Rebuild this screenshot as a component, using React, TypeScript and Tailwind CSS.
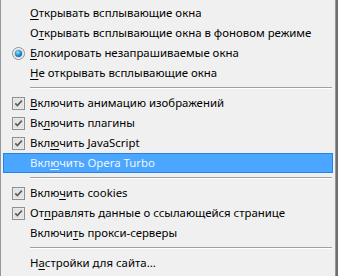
import type { ReactNode } from 'react';

type Item =
  | { kind: 'sep' }
  | {
      kind: 'item';
      pre: string;
      key: string;
      post: string;
      mark?: 'radio' | 'check';
      active?: boolean;
    };

const items: Item[] = [
  { kind: 'item', pre: '', key: 'О', post: 'ткрывать всплывающие окна' },
  { kind: 'item', pre: 'О', key: 'т', post: 'крывать всплывающие окна в фоновом режиме' },
  { kind: 'item', pre: '', key: 'Б', post: 'локировать незапрашиваемые окна', mark: 'radio' },
  { kind: 'item', pre: '', key: 'Н', post: 'е открывать всплывающие окна' },
  { kind: 'sep' },
  { kind: 'item', pre: '', key: 'В', post: 'ключить анимацию изображений', mark: 'check' },
  { kind: 'item', pre: 'Вк', key: 'л', post: 'ючить плагины', mark: 'check' },
  { kind: 'item', pre: 'Вкл', key: 'ю', post: 'чить JavaScript', mark: 'check' },
  { kind: 'item', pre: 'Вкл', key: 'ю', post: 'чить Opera Turbo', active: true },
  { kind: 'sep' },
  { kind: 'item', pre: 'Вклю', key: 'ч', post: 'ить cookies', mark: 'check' },
  { kind: 'item', pre: 'От', key: 'п', post: 'равлять данные о ссылающейся странице', mark: 'check' },
  { kind: 'item', pre: 'Включи', key: 'т', post: 'ь прокси-серверы' },
  { kind: 'sep' },
  { kind: 'item', pre: 'Н', key: 'а', post: 'стройки для сайта...' },
];

function Radio() {
  return (
    <svg width="13" height="13" viewBox="0 0 13 13">
      <defs>
        <radialGradient id="rb" cx="0.4" cy="0.35" r="0.7">
          <stop offset="0" stopColor="#9fe3ff" />
          <stop offset="0.5" stopColor="#2a9be0" />
          <stop offset="1" stopColor="#0d5ca8" />
        </radialGradient>
      </defs>
      <circle cx="6.5" cy="6.5" r="6" fill="#f4f4f4" stroke="#8e8f8f" />
      <circle cx="6.5" cy="6.5" r="4.6" fill="#dcdcdc" />
      <circle cx="6.5" cy="6.5" r="3.6" fill="url(#rb)" />
    </svg>
  );
}

function Check() {
  return (
    <svg width="13" height="13" viewBox="0 0 13 13">
      <rect x="0.5" y="0.5" width="12" height="12" fill="#f4f4f4" stroke="#8e8f8f" />
      <rect x="2" y="2" width="9" height="9" fill="#e6e6e6" stroke="#d2d2d2" strokeWidth="0.6" />
      <path d="M3.3 6.4 L5.4 8.6 L9.8 3.6" fill="none" stroke="#5c5c5c" strokeWidth="1.6" />
    </svg>
  );
}

function Label({ pre, k, post }: { pre: string; k: string; post: string }): ReactNode {
  return (
    <span>
      {pre}
      <span className="underline underline-offset-2 decoration-1">{k}</span>
      {post}
    </span>
  );
}

export default function App() {
  return (
    <div className="flex h-[276px] w-[338px] bg-[#6f6f6f] font-['Noto_Sans',sans-serif] text-[11.4px]">
      <div className="flex h-full w-[336px] flex-col border-x border-[#979797] bg-[#f0f0f0] px-[2px] pt-[3px]">
        {items.map((it, i) =>
          it.kind === 'sep' ? (
            <div key={i} className="flex h-[10px] items-center pl-[27px] pr-[1px]">
              <div className="h-[2px] w-full border-t border-[#a0a0a0] border-b-white border-b" />
            </div>
          ) : (
            <div
              key={i}
              className={
                it.active
                  ? 'flex h-[20px] items-center border border-[#2b82e6] bg-[#4aa6ff] text-[#eef5ff]'
                  : 'flex h-[20px] items-center border border-transparent text-black'
              }
            >
              <div className="flex w-[26px] justify-center pl-[2px]">
                {it.mark === 'radio' && <Radio />}
                {it.mark === 'check' && <Check />}
              </div>
              <Label pre={it.pre} k={it.key} post={it.post} />
            </div>
          )
        )}
      </div>
    </div>
  );
}
